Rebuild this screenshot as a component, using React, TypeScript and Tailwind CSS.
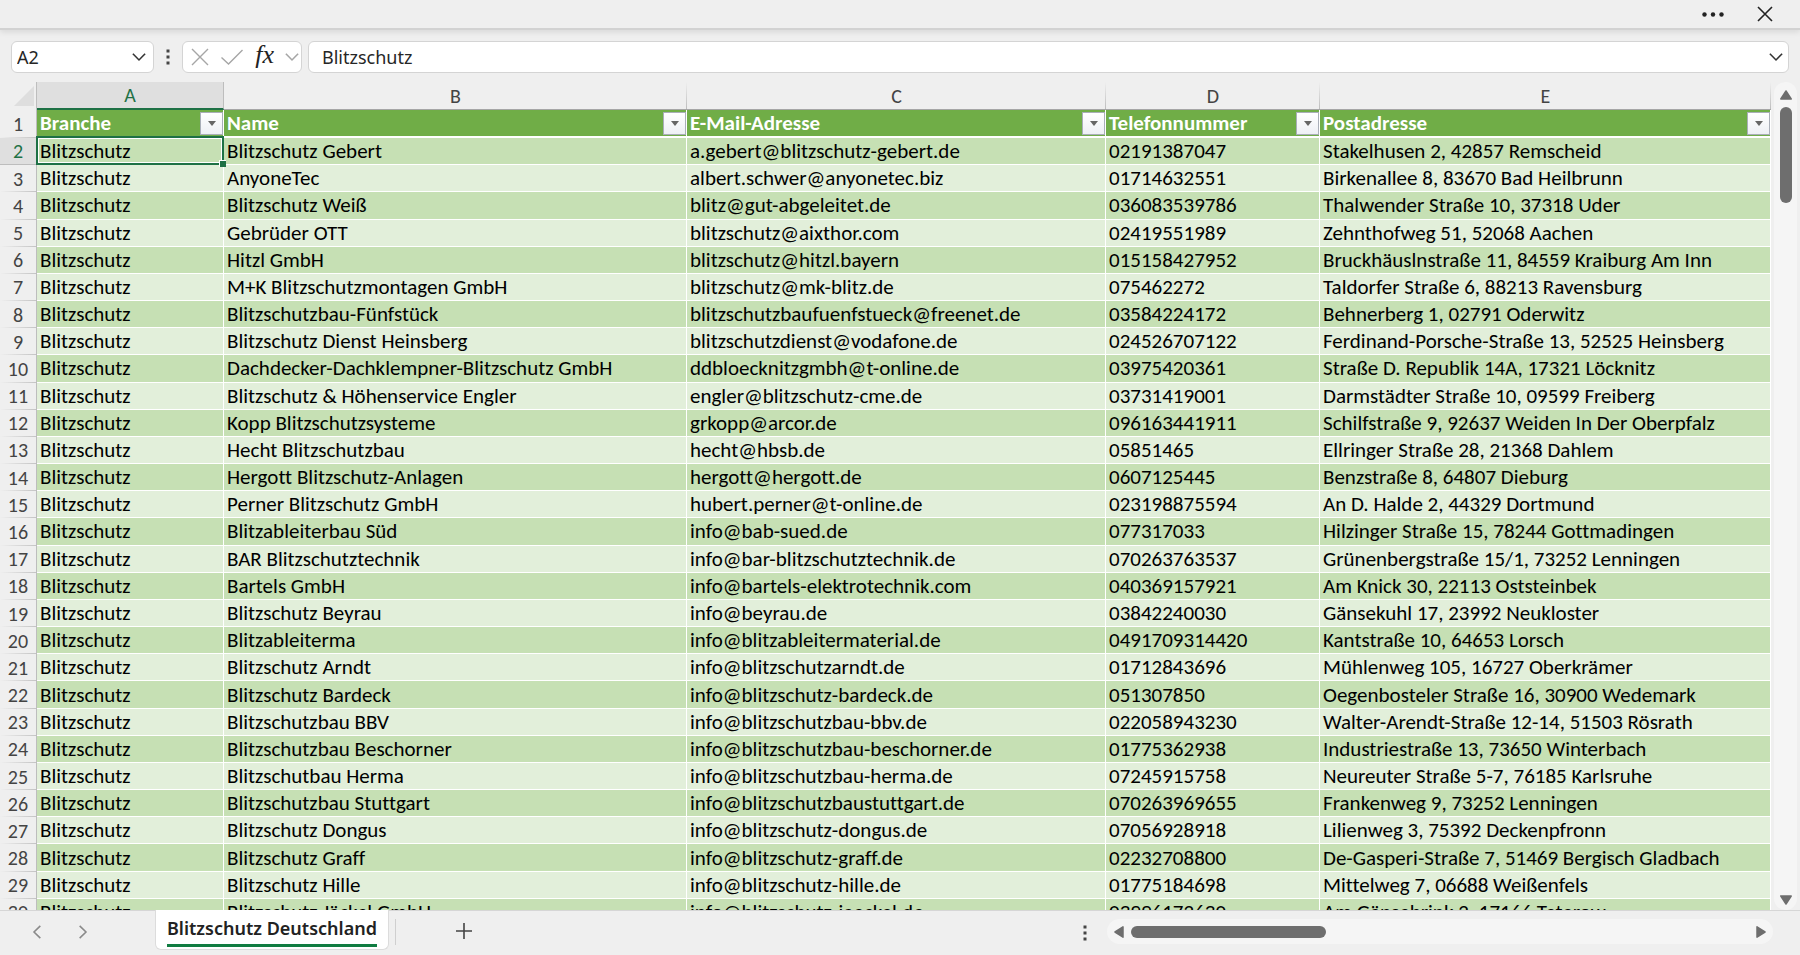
import React, { useState } from 'react';

interface Contact {
  name: string;
  email: string;
  phone: string;
  address: string;
}

const contacts: Contact[] = [
  { name: 'Blitzschutz Gebert', email: 'a.gebert@blitzschutz-gebert.de', phone: '02191387047', address: 'Stakelhusen 2, 42857 Remscheid' },
  { name: 'AnyoneTec', email: 'albert.schwer@anyonetec.biz', phone: '01714632551', address: 'Birkenallee 8, 83670 Bad Heilbrunn' },
  { name: 'Blitzschutz Weiß', email: 'blitz@gut-abgeleitet.de', phone: '036083539786', address: 'Thalwender Straße 10, 37318 Uder' },
  { name: 'Gebrüder OTT', email: 'blitzschutz@aixthor.com', phone: '02419551989', address: 'Zehnthofweg 51, 52068 Aachen' },
  { name: 'Hitzl GmbH', email: 'blitzschutz@hitzl.bayern', phone: '015158427952', address: 'Bruckhäuslnstraße 11, 84559 Kraiburg Am Inn' },
  { name: 'M+K Blitzschutzmontagen GmbH', email: 'blitzschutz@mk-blitz.de', phone: '075462272', address: 'Taldorfer Straße 6, 88213 Ravensburg' },
  { name: 'Blitzschutzbau-Fünfstück', email: 'blitzschutzbaufuenfstueck@freenet.de', phone: '03584224172', address: 'Behnerberg 1, 02791 Oderwitz' },
  { name: 'Blitzschutz Dienst Heinsberg', email: 'blitzschutzdienst@vodafone.de', phone: '024526707122', address: 'Ferdinand-Porsche-Straße 13, 52525 Heinsberg' },
  { name: 'Dachdecker-Dachklempner-Blitzschutz GmbH', email: 'ddbloecknitzgmbh@t-online.de', phone: '03975420361', address: 'Straße D. Republik 14A, 17321 Löcknitz' },
  { name: 'Blitzschutz & Höhenservice Engler', email: 'engler@blitzschutz-cme.de', phone: '03731419001', address: 'Darmstädter Straße 10, 09599 Freiberg' },
  { name: 'Kopp Blitzschutzsysteme', email: 'grkopp@arcor.de', phone: '096163441911', address: 'Schilfstraße 9, 92637 Weiden In Der Oberpfalz' },
  { name: 'Hecht Blitzschutzbau', email: 'hecht@hbsb.de', phone: '05851465', address: 'Ellringer Straße 28, 21368 Dahlem' },
  { name: 'Hergott Blitzschutz-Anlagen', email: 'hergott@hergott.de', phone: '0607125445', address: 'Benzstraße 8, 64807 Dieburg' },
  { name: 'Perner Blitzschutz GmbH', email: 'hubert.perner@t-online.de', phone: '023198875594', address: 'An D. Halde 2, 44329 Dortmund' },
  { name: 'Blitzableiterbau Süd', email: 'info@bab-sued.de', phone: '077317033', address: 'Hilzinger Straße 15, 78244 Gottmadingen' },
  { name: 'BAR Blitzschutztechnik', email: 'info@bar-blitzschutztechnik.de', phone: '070263763537', address: 'Grünenbergstraße 15/1, 73252 Lenningen' },
  { name: 'Bartels GmbH', email: 'info@bartels-elektrotechnik.com', phone: '040369157921', address: 'Am Knick 30, 22113 Oststeinbek' },
  { name: 'Blitzschutz Beyrau', email: 'info@beyrau.de', phone: '03842240030', address: 'Gänsekuhl 17, 23992 Neukloster' },
  { name: 'Blitzableiterma', email: 'info@blitzableitermaterial.de', phone: '0491709314420', address: 'Kantstraße 10, 64653 Lorsch' },
  { name: 'Blitzschutz Arndt', email: 'info@blitzschutzarndt.de', phone: '01712843696', address: 'Mühlenweg 105, 16727 Oberkrämer' },
  { name: 'Blitzschutz Bardeck', email: 'info@blitzschutz-bardeck.de', phone: '051307850', address: 'Oegenbosteler Straße 16, 30900 Wedemark' },
  { name: 'Blitzschutzbau BBV', email: 'info@blitzschutzbau-bbv.de', phone: '022058943230', address: 'Walter-Arendt-Straße 12-14, 51503 Rösrath' },
  { name: 'Blitzschutzbau Beschorner', email: 'info@blitzschutzbau-beschorner.de', phone: '01775362938', address: 'Industriestraße 13, 73650 Winterbach' },
  { name: 'Blitzschutbau Herma', email: 'info@blitzschutzbau-herma.de', phone: '07245915758', address: 'Neureuter Straße 5-7, 76185 Karlsruhe' },
  { name: 'Blitzschutzbau Stuttgart', email: 'info@blitzschutzbaustuttgart.de', phone: '070263969655', address: 'Frankenweg 9, 73252 Lenningen' },
  { name: 'Blitzschutz Dongus', email: 'info@blitzschutz-dongus.de', phone: '07056928918', address: 'Lilienweg 3, 75392 Deckenpfronn' },
  { name: 'Blitzschutz Graff', email: 'info@blitzschutz-graff.de', phone: '02232708800', address: 'De-Gasperi-Straße 7, 51469 Bergisch Gladbach' },
  { name: 'Blitzschutz Hille', email: 'info@blitzschutz-hille.de', phone: '01775184698', address: 'Mittelweg 7, 06688 Weißenfels' },
  { name: 'Blitzschutz Jäckel GmbH', email: 'info@blitzschutz-jaeckel.de', phone: '03996172630', address: 'Am Gänsebrink 2, 17166 Teterow' },
];

const columns = [
  { letter: 'A', title: 'Branche' },
  { letter: 'B', title: 'Name' },
  { letter: 'C', title: 'E-Mail-Adresse' },
  { letter: 'D', title: 'Telefonnummer' },
  { letter: 'E', title: 'Postadresse' },
];

const Chevron = ({ className }: { className?: string }) => (
  <svg viewBox="0 0 16 10" className={className} fill="none" stroke="currentColor" strokeWidth="1.8">
    <path d="M1 1.200 8 8.400l7-7.200" />
  </svg>
);

const VerticalDots = ({ className }: { className?: string }) => (
  <svg viewBox="0 0 4 16" className={className} fill="currentColor">
    <rect x="0.5" y="0.5" width="3" height="3" />
    <rect x="0.5" y="6.5" width="3" height="3" />
    <rect x="0.5" y="12.5" width="3" height="3" />
  </svg>
);

// Rounded triangle pointing up, turned by the caller
const Arrow = ({ className }: { className?: string }) => (
  <svg viewBox="0 0 12 10" className={className} fill="#6e6e6e" stroke="#6e6e6e" strokeWidth="1.5" strokeLinejoin="round">
    <path d="M6 1 11.2 9H.8Z" />
  </svg>
);

const TitleBar = () => (
  <header className="relative z-10 flex h-[30px] shrink-0 items-center justify-end gap-6 border-b-2 border-[#d2d2d2] bg-[#efefef] pr-[23px] shadow-[0_2px_6px_rgba(0,0,0,0.10)]">
    <button type="button" aria-label="Weitere Optionen" className="flex h-6 w-8 items-center justify-center text-[#222]">
      <svg viewBox="0 0 22 5" className="h-[5px] w-[22px]" fill="currentColor">
        <circle cx="2.5" cy="2.5" r="2.2" />
        <circle cx="11" cy="2.5" r="2.2" />
        <circle cx="19.5" cy="2.5" r="2.2" />
      </svg>
    </button>
    <button type="button" aria-label="Schließen" className="flex h-6 w-6 items-center justify-center text-[#222]">
      <svg viewBox="0 0 16 16" className="h-4 w-4" fill="none" stroke="currentColor" strokeWidth="1.6">
        <path d="M1 1l14 14M15 1L1 15" />
      </svg>
    </button>
  </header>
);

interface FormulaBarProps {
  value: string;
  onChange: (value: string) => void;
}

const FormulaBar: React.FC<FormulaBarProps> = ({ value, onChange }) => (
  <div className="flex h-[52px] shrink-0 items-center px-[11px] pt-px font-['Noto_Sans',sans-serif] text-lg text-[#262626]">
    <div className="flex h-8 w-[143px] shrink-0 items-center rounded-md border border-[#d4d4d4] bg-white pr-[7px]">
      <input
        type="text"
        aria-label="Namenfeld"
        defaultValue="A2"
        className="w-full min-w-0 bg-transparent pl-[5px] outline-none"
      />
      <button type="button" aria-label="Namen anzeigen" className="text-[#333]">
        <Chevron className="h-[10px] w-[14px]" />
      </button>
    </div>
    <VerticalDots className="mx-3 h-4 w-1 shrink-0 text-[#444]" />
    <div className="flex h-8 w-[120px] shrink-0 items-center justify-between rounded-md border border-[#d4d4d4] bg-white pr-[2px] pl-2 text-[#a6a6a6]">
      <button type="button" aria-label="Abbrechen">
        <svg viewBox="0 0 18 18" className="h-[18px] w-[18px]" fill="none" stroke="currentColor" strokeWidth="1.4">
          <path d="M1 1l16 16M17 1L1 17" />
        </svg>
      </button>
      <button type="button" aria-label="Eingeben">
        <svg viewBox="0 0 24 18" className="h-[18px] w-6" fill="none" stroke="currentColor" strokeWidth="1.4">
          <path d="M1.5 9.500l7 6.500L22.500 2" />
        </svg>
      </button>
      <button type="button" className="pb-1 font-['Liberation_Serif',serif] text-[26px] leading-6 font-medium text-[#222] italic">
        fx
      </button>
      <button type="button" aria-label="Funktionen">
        <Chevron className="h-[10px] w-[14px]" />
      </button>
    </div>
    <div className="ml-[6px] flex h-8 flex-1 items-center rounded-md border border-[#d4d4d4] bg-white pr-[5px]">
      <input
        type="text"
        aria-label="Bearbeitungsleiste"
        value={value}
        onChange={(e) => onChange(e.target.value)}
        className="w-full min-w-0 bg-transparent pl-[13px] outline-none"
      />
      <button type="button" aria-label="Bearbeitungsleiste erweitern" className="text-[#333]">
        <Chevron className="h-[10px] w-[14px]" />
      </button>
    </div>
  </div>
);

const FilterButton = ({ column }: { column: string }) => (
  <button
    type="button"
    aria-label={`${column} filtern`}
    className="flex h-[23px] w-[23px] shrink-0 items-center justify-center border border-[#a9aeb8] bg-linear-to-b from-white to-[#eef0f5]"
  >
    <svg viewBox="0 0 8 5" className="h-[5px] w-2" fill="#666">
      <path d="M0 0h8L4 5Z" />
    </svg>
  </button>
);

interface SheetProps {
  category: string;
}

const Sheet: React.FC<SheetProps> = ({ category }) => {
  const cellClass = 'truncate border-r border-b border-white py-0 pl-[3px]';

  return (
    <div className="min-w-0 flex-1 overflow-hidden">
      <table className="h-[844px] w-full table-fixed border-separate border-spacing-0 font-['Carlito','Noto_Sans',sans-serif] text-[21px] leading-[26px] text-black [font-variant-ligatures:none]">
        <colgroup>
          <col className="w-[37px]" />
          <col className="w-[187px]" />
          <col className="w-[463px]" />
          <col className="w-[419px]" />
          <col className="w-[214px]" />
          <col />
        </colgroup>
        <thead>
          <tr className="h-[27px] text-xl leading-[26px] text-[#444]">
            <td className="border-r border-[#bdbdbd] p-0">
              <svg viewBox="0 0 20 20" className="mr-[2px] ml-auto h-5 w-5" fill="#dedede">
                <path d="M20 0v20H0Z" />
              </svg>
            </td>
            {columns.map(({ letter }) => (
              <th
                key={letter}
                scope="col"
                className={
                  letter === 'A'
                    ? 'border-r border-b-2 border-r-[#bdbdbd] border-b-[#1e7145] bg-[#dfdfdf] p-0 font-normal text-[#1e7145]'
                    : 'border-b border-[#a6a6a6] bg-linear-to-b from-transparent to-[#bdbdbd] bg-[length:1px_100%] bg-right bg-no-repeat p-0 font-normal'
                }
              >
                {letter}
              </th>
            ))}
          </tr>
          <tr className="h-[27px] bg-[#70ad47] text-white">
            <th scope="row" className="border-r border-[#bdbdbd] bg-[#efefef] bg-linear-to-r from-transparent to-[#c4c4c4] bg-[length:100%_1px] bg-bottom bg-no-repeat p-0 text-xl leading-[26px] font-normal text-[#444]">
              1
            </th>
            {columns.map(({ title }) => (
              <th key={title} scope="col" className="border-r border-b-2 border-white py-0 pl-[3px] text-left">
                <div className="flex items-center justify-between">
                  {title}
                  <FilterButton column={title} />
                </div>
              </th>
            ))}
          </tr>
        </thead>
        <tbody>
          {contacts.map((contact, index) => {
            const selected = index === 0;
            return (
              <tr key={contact.email} className="h-[27px] odd:bg-[#c6e0b4] even:bg-[#e2efda]">
                <th
                  scope="row"
                  className={
                    selected
                      ? 'border-r border-b border-[#bdbdbd] bg-[#dfdfdf] p-0 text-xl leading-[26px] font-normal text-[#1e7145]'
                      : 'border-r border-[#bdbdbd] bg-[#efefef] bg-linear-to-r from-transparent to-[#c4c4c4] bg-[length:100%_1px] bg-bottom bg-no-repeat p-0 text-xl leading-[26px] font-normal text-[#444]'
                  }
                >
                  {index + 2}
                </th>
                {selected ? (
                  <td className="relative border-r border-b border-white py-0 pl-[3px]">
                    {category}
                    <span className="pointer-events-none absolute -inset-x-px -top-[2px] -bottom-px border-2 border-[#1e7145] ring-1 ring-white ring-inset" />
                    <span className="absolute -right-[3px] -bottom-[3px] h-[7px] w-[7px] border-t border-l border-white bg-[#1e7145]" />
                  </td>
                ) : (
                  <td className={cellClass}>Blitzschutz</td>
                )}
                <td className={cellClass}>{contact.name}</td>
                <td className={cellClass}>{contact.email}</td>
                <td className={cellClass}>{contact.phone}</td>
                <td className={cellClass}>{contact.address}</td>
              </tr>
            );
          })}
        </tbody>
      </table>
    </div>
  );
};

const VerticalScrollbar = () => (
  <div className="ml-[3px] flex w-[23px] shrink-0 flex-col items-center rounded-full bg-[#f5f5f5] pt-2 pb-[5px]">
    <button type="button" aria-label="Nach oben">
      <Arrow className="h-[10px] w-3" />
    </button>
    <div className="mt-[7px] h-24 w-3 rounded-full bg-[#6e6e6e]" />
    <button type="button" aria-label="Nach unten" className="mt-auto">
      <Arrow className="h-[10px] w-3 rotate-180" />
    </button>
  </div>
);

const SheetTabs = () => (
  <footer className="relative flex h-[45px] shrink-0 items-start border-t border-[#d6d6d6] bg-[#efefef] text-[#8a8a8a]">
    <nav className="flex h-[42px] items-center gap-8 pl-[30px]">
      <button type="button" aria-label="Vorheriges Blatt">
        <Chevron className="h-[10px] w-[14px] rotate-90" />
      </button>
      <button type="button" aria-label="Nächstes Blatt">
        <Chevron className="h-[10px] w-[14px] -rotate-90" />
      </button>
    </nav>
    <button
      type="button"
      className="-mt-px ml-[65px] h-10 rounded-b-md border border-t-0 border-[#dcdcdc] bg-white px-[11px] font-['Noto_Sans',sans-serif] text-lg leading-8 font-semibold text-[#222]"
    >
      <span className="block border-b-3 border-[#107c41]">Blitzschutz Deutschland</span>
    </button>
    <span className="mt-2 ml-[6px] h-[26px] w-px bg-[#cfcfcf]" />
    <button type="button" aria-label="Neues Blatt" className="mt-3 ml-[60px] text-[#444]">
      <svg viewBox="0 0 16 16" className="h-4 w-4" fill="none" stroke="currentColor" strokeWidth="1.6">
        <path d="M8 0v16M0 8h16" />
      </svg>
    </button>
    <VerticalDots className="mt-[14px] mr-5 ml-auto h-4 w-1 text-[#444]" />
    <div className="mt-2 mr-[27px] flex h-[25px] w-[37%] items-center rounded-full bg-[#f5f5f5] px-[6px]">
      <button type="button" aria-label="Nach links">
        <Arrow className="h-[10px] w-3 -rotate-90" />
      </button>
      <div className="ml-[6px] h-3 w-[195px] rounded-full bg-[#6e6e6e]" />
      <button type="button" aria-label="Nach rechts" className="ml-auto">
        <Arrow className="h-[10px] w-3 rotate-90" />
      </button>
    </div>
  </footer>
);

export default function App() {
  const [category, setCategory] = useState('Blitzschutz');

  return (
    <div className="flex h-screen flex-col overflow-hidden bg-[#efefef]">
      <TitleBar />
      <FormulaBar value={category} onChange={setCategory} />
      <main className="flex min-h-0 flex-1 pr-[3px]">
        <Sheet category={category} />
        <VerticalScrollbar />
      </main>
      <SheetTabs />
    </div>
  );
}
